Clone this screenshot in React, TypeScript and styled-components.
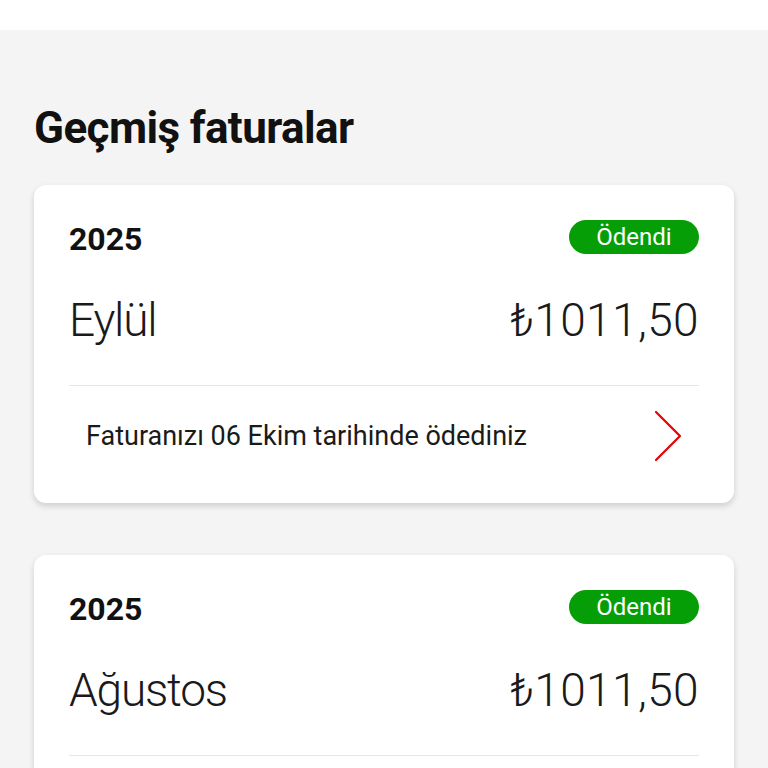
import React from 'react';
import styled, { createGlobalStyle } from 'styled-components';

const GlobalStyle = createGlobalStyle`
  html, body {
    margin: 0;
    padding: 0;
    background: #f4f4f4;
  }
  body {
    font-family: Roboto, "Liberation Sans", sans-serif;
    color: #1a1a1a;
  }
`;

const Page = styled.div`
  width: 768px;
  height: 768px;
  overflow: hidden;
  background: #f4f4f4;
`;

const TopBar = styled.div`
  height: 30px;
  background: #ffffff;
`;

const Content = styled.div`
  padding: 0 34px;
`;

const Title = styled.h1`
  margin: 0;
  padding-top: 70px;
  font-size: 44px;
  line-height: 56px;
  font-weight: 700;
  letter-spacing: -0.6px;
  color: #111;
`;

const CardList = styled.div`
  display: flex;
  flex-direction: column;
  gap: 52px;
  margin-top: 29px;
`;

const Card = styled.div`
  background: #fff;
  border-radius: 12px;
  box-shadow: 0 3px 6px rgba(0, 0, 0, 0.16);
  padding: 35px 35px 17px;
`;

const HeaderRow = styled.div`
  display: flex;
  align-items: center;
  justify-content: space-between;
  height: 34px;
`;

const Year = styled.span`
  font-size: 32px;
  font-weight: 700;
  color: #111;
  padding-top: 4px;
`;

const Badge = styled.span`
  display: inline-flex;
  align-items: center;
  justify-content: center;
  height: 34px;
  width: 130px;
  border-radius: 17px;
  background: #069e06;
  color: #fff;
  font-size: 24px;
  font-weight: 400;
`;

const AmountRow = styled.div`
  display: flex;
  align-items: center;
  justify-content: space-between;
  height: 60px;
  margin-top: 36px;
  font-size: 46px;
  font-weight: 300;
  color: #1a1a1a;
`;

const Month = styled.span`
  letter-spacing: -1.2px;
`;

const Amount = styled.span`
  letter-spacing: 0.4px;
`;

const Divider = styled.div`
  height: 1px;
  background: #e6e6e6;
  margin-top: 35px;
`;

const FooterRow = styled.div`
  display: flex;
  align-items: center;
  justify-content: space-between;
  height: 100px;
  padding: 0 17px;
`;

const FooterText = styled.span`
  font-size: 27px;
  font-weight: 400;
  color: #1a1a1a;
`;

const Chevron = () => (
  <svg width="28" height="52" viewBox="0 0 28 52" fill="none">
    <path d="M2 2 L26 26 L2 50" stroke="#e60000" strokeWidth="2.2" strokeLinecap="round" strokeLinejoin="round" />
  </svg>
);

type Bill = { year: string; month: string; amount: string; note: string };

const bills: Bill[] = [
  { year: '2025', month: 'Eylül', amount: '₺1011,50', note: 'Faturanızı 06 Ekim tarihinde ödediniz' },
  { year: '2025', month: 'Ağustos', amount: '₺1011,50', note: 'Faturanızı 06 Eylül tarihinde ödediniz' },
];

const BillCard: React.FC<{ bill: Bill }> = ({ bill }) => (
  <Card>
    <HeaderRow>
      <Year>{bill.year}</Year>
      <Badge>Ödendi</Badge>
    </HeaderRow>
    <AmountRow>
      <Month>{bill.month}</Month>
      <Amount>{bill.amount}</Amount>
    </AmountRow>
    <Divider />
    <FooterRow>
      <FooterText>{bill.note}</FooterText>
      <Chevron />
    </FooterRow>
  </Card>
);

export default function App() {
  return (
    <Page>
      <GlobalStyle />
      <TopBar />
      <Content>
        <Title>Geçmiş faturalar</Title>
        <CardList>
          {bills.map((b, i) => (
            <BillCard key={i} bill={b} />
          ))}
        </CardList>
      </Content>
    </Page>
  );
}
